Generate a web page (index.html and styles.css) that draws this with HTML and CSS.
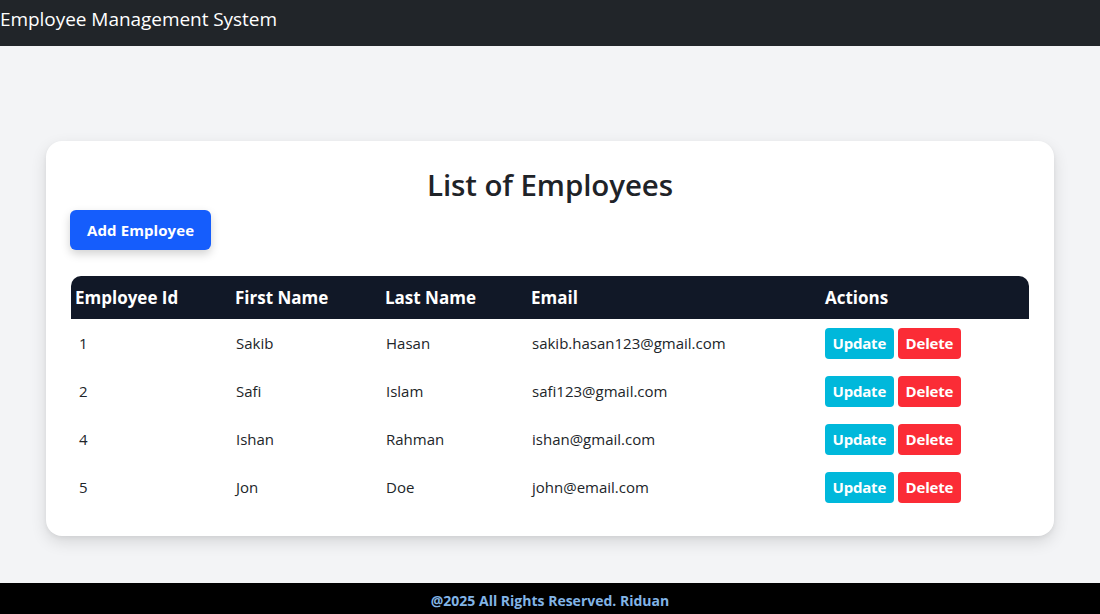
FILE: index.html
```html
<!DOCTYPE html>
<html lang="en">
<head>
<meta charset="utf-8">
<title>Employee Management System</title>
<link rel="stylesheet" href="styles.css">
</head>
<body>
<header class="navbar">
  <span class="brand">Employee Management System</span>
</header>
<main class="main">
  <section class="card">
    <h2 class="title">List of Employees</h2>
    <div class="toolbar"><button class="btn btn-add">Add Employee</button></div>
    <table class="table">
      <colgroup>
        <col class="c1"><col class="c2"><col class="c3"><col class="c4"><col class="c5">
      </colgroup>
      <thead>
        <tr><th>Employee Id</th><th>First Name</th><th>Last Name</th><th>Email</th><th>Actions</th></tr>
      </thead>
      <tbody>
        <tr><td class="id">1</td><td>Sakib</td><td>Hasan</td><td>sakib.hasan123@gmail.com</td><td><div class="actions"><button class="btn btn-update">Update</button><button class="btn btn-delete">Delete</button></div></td></tr>
        <tr><td class="id">2</td><td>Safi</td><td>Islam</td><td>safi123@gmail.com</td><td><div class="actions"><button class="btn btn-update">Update</button><button class="btn btn-delete">Delete</button></div></td></tr>
        <tr><td class="id">4</td><td>Ishan</td><td>Rahman</td><td>ishan@gmail.com</td><td><div class="actions"><button class="btn btn-update">Update</button><button class="btn btn-delete">Delete</button></div></td></tr>
        <tr><td class="id">5</td><td>Jon</td><td>Doe</td><td>john@email.com</td><td><div class="actions"><button class="btn btn-update">Update</button><button class="btn btn-delete">Delete</button></div></td></tr>
      </tbody>
    </table>
  </section>
</main>
<footer class="footer">@2025 All Rights Reserved. Riduan</footer>
</body>
</html>
```

FILE: styles.css
```css
* { box-sizing: border-box; }
html, body { margin: 0; padding: 0; }
body {
  font-family: "Open Sans", "Noto Sans", sans-serif;
  color: #212529;
  background: #f3f4f6;
  height: 100vh;
  display: flex;
  flex-direction: column;
}
.navbar {
  background: #212529;
  height: 46px;
  display: flex;
  align-items: center;
  flex-shrink: 0;
}
.brand {
  color: #fff;
  font-size: 19px;
  letter-spacing: -0.05px;
  line-height: 1;
  margin-top: -7px;
}
.main {
  flex: 1;
  padding: 95px 46px 0;
}
.card {
  background: #fff;
  border-radius: 16px;
  box-shadow: 0 6px 16px rgba(0,0,0,0.12), 0 2px 4px rgba(0,0,0,0.05);
  padding: 24px 24px 25px;
}
.title {
  margin: 0;
  text-align: center;
  font-size: 29.5px;
  font-weight: 600;
  line-height: 40px;
  letter-spacing: -0.1px;
  color: #1f2328;
}
.toolbar { display: flex; margin-top: 5px; }
.btn {
  font-family: inherit;
  border: none;
  color: #fff;
  font-weight: 700;
  cursor: pointer;
}
.btn-add {
  background: #155dfc;
  height: 40px;
  padding: 0 17px;
  border-radius: 6px;
  font-size: 15px;
  letter-spacing: 0.1px;
  box-shadow: 0 4px 10px rgba(0,0,0,0.18);
}
.table {
  margin-top: 26px;
  margin-left: 1px;
  width: 958px;
  border-collapse: separate;
  border-spacing: 0;
  table-layout: fixed;
}
.c1 { width: 160px; }
.c2 { width: 150px; }
.c3 { width: 146px; }
.c4 { width: 294px; }
.c5 { width: 208px; }
.table th {
  background: #111827;
  color: #fff;
  text-align: left;
  font-size: 17px;
  font-weight: 700;
  letter-spacing: 0;
  height: 43px;
  padding: 0 4px;
}
.table th:first-child { border-top-left-radius: 10px; }
.table th:last-child { border-top-right-radius: 10px; }
.table td {
  height: 48px;
  padding: 0 5px;
  font-size: 15px;
  letter-spacing: 0;
  color: #212529;
}
.table td.id { padding-left: 8px; }
.actions { display: flex; gap: 4px; margin-left: -1px; }
.btn-update, .btn-delete {
  height: 31px;
  padding: 0 7.5px;
  border-radius: 4px;
  font-size: 15px;
  letter-spacing: -0.2px;
}
.btn-update { background: #00b8db; }
.btn-delete { background: #fb2c36; padding: 0 8px; }
.footer {
  background: #000;
  height: 31px;
  flex-shrink: 0;
  display: flex;
  align-items: center;
  justify-content: center;
  color: #82b4e6;
  font-weight: 700;
  font-size: 14px;
  padding-top: 3px;
}
```
